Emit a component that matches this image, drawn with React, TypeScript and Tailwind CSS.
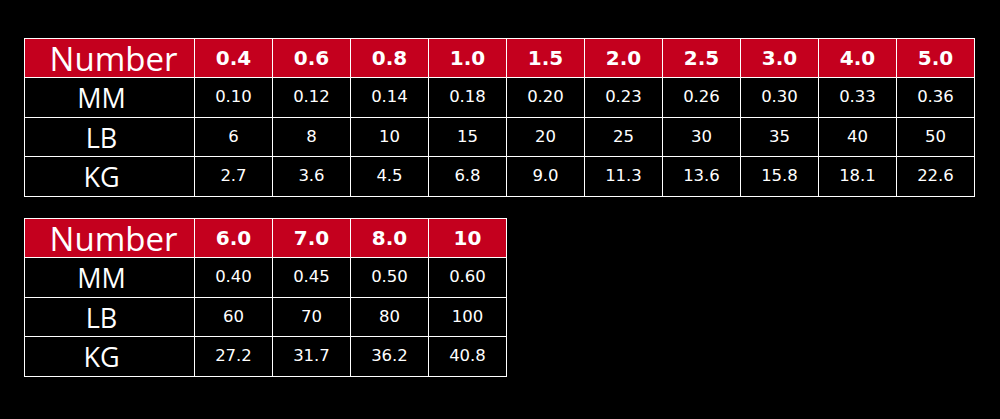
const table1 = {
  numbers: ["0.4", "0.6", "0.8", "1.0", "1.5", "2.0", "2.5", "3.0", "4.0", "5.0"],
  mm: ["0.10", "0.12", "0.14", "0.18", "0.20", "0.23", "0.26", "0.30", "0.33", "0.36"],
  lb: ["6", "8", "10", "15", "20", "25", "30", "35", "40", "50"],
  kg: ["2.7", "3.6", "4.5", "6.8", "9.0", "11.3", "13.6", "15.8", "18.1", "22.6"],
};

const table2 = {
  numbers: ["6.0", "7.0", "8.0", "10"],
  mm: ["0.40", "0.45", "0.50", "0.60"],
  lb: ["60", "70", "80", "100"],
  kg: ["27.2", "31.7", "36.2", "40.8"],
};

type Data = typeof table1;

function Label({ children }: { children: React.ReactNode }) {
  return (
    <div className="flex items-center justify-center bg-black pr-4 font-['Open_Sans',sans-serif] text-[27px] leading-none text-white">
      {children}
    </div>
  );
}

function Cell({ children }: { children: React.ReactNode }) {
  return (
    <div className="flex items-center justify-center bg-black font-['DejaVu_Sans',sans-serif] text-[16.5px] leading-none text-white">
      {children}
    </div>
  );
}

function SizeTable({ data, cols }: { data: Data; cols: string }) {
  return (
    <div className={`grid w-max gap-px bg-white p-px grid-rows-[38px_39px_38px_39px] ${cols}`}>
      <div className="flex items-center justify-center bg-[#c4001e] pl-2 font-['Open_Sans',sans-serif] text-[33px] leading-none text-white">
        Number
      </div>
      {data.numbers.map((n) => (
        <div
          key={n}
          className="flex items-center justify-center bg-[#c4001e] font-['DejaVu_Sans',sans-serif] text-[20px] font-bold leading-none text-white"
        >
          {n}
        </div>
      ))}
      <Label>MM</Label>
      {data.mm.map((v, i) => (
        <Cell key={i}>{v}</Cell>
      ))}
      <Label>LB</Label>
      {data.lb.map((v, i) => (
        <Cell key={i}>{v}</Cell>
      ))}
      <Label>KG</Label>
      {data.kg.map((v, i) => (
        <Cell key={i}>{v}</Cell>
      ))}
    </div>
  );
}

export default function App() {
  return (
    <div className="flex h-[419px] w-[1000px] flex-col gap-[21px] bg-black pl-[24px] pt-[38px]">
      <SizeTable data={table1} cols="grid-cols-[169px_repeat(10,77px)]" />
      <SizeTable data={table2} cols="grid-cols-[169px_repeat(4,77px)]" />
    </div>
  );
}
